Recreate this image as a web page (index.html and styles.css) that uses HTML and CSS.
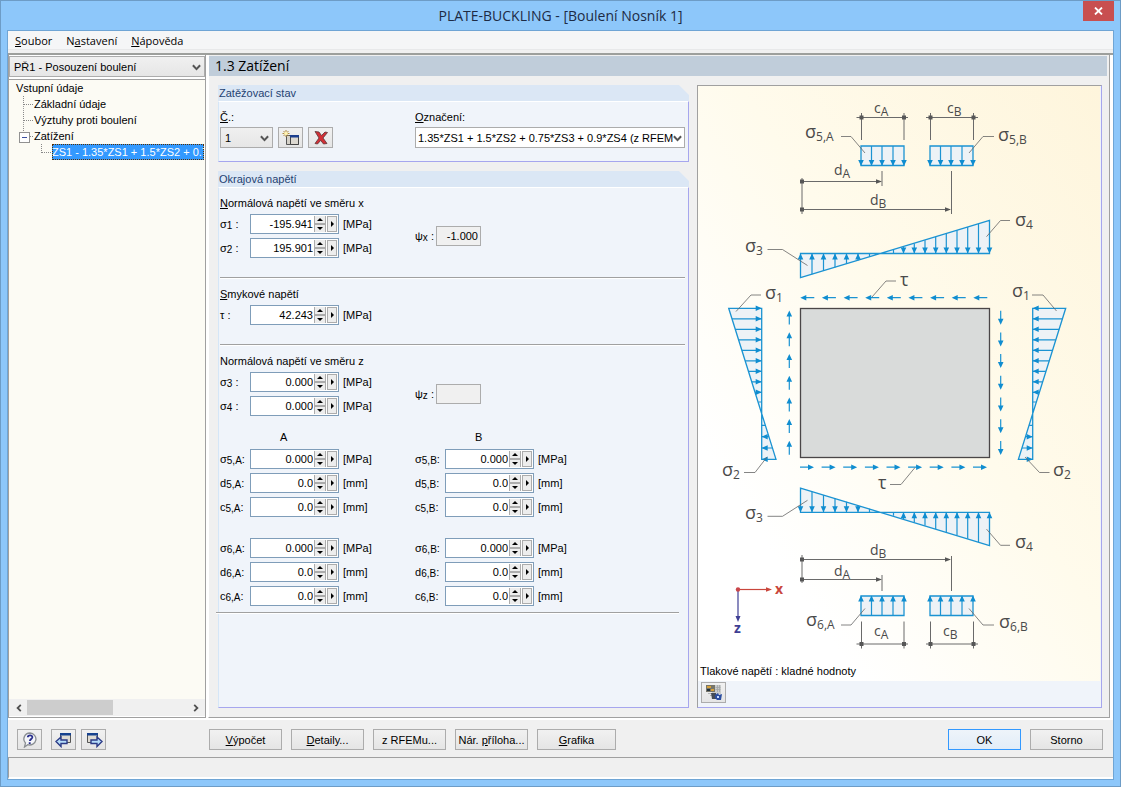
FILE: index.html
```html
<!DOCTYPE html>
<html lang="cs">
<head>
  <meta charset="UTF-8">
  <meta name="viewport" content="width=device-width, initial-scale=1.0">
  <title>PLATE-BUCKLING - [Boulení Nosník 1]</title>
  <link rel="stylesheet" href="styles.css">
</head>
<body>
  <div class="window">
    <header class="titlebar">
      <h1>PLATE-BUCKLING - [Boulení Nosník 1]</h1>
      <button class="close-btn" aria-label="Zavřít">
        <svg width="9" height="8" viewBox="0 0 9 8"><path d="M1 0.5l7 7M8 0.5l-7 7" stroke="#fff" stroke-width="1.8"/></svg>
      </button>
    </header>

    <div class="client">
      <nav class="menubar">
        <button><u>S</u>oubor</button>
        <button>N<u>a</u>stavení</button>
        <button><u>N</u>ápověda</button>
      </nav>

      <div class="workspace">
        <!-- strom -->
        <aside class="sidebar">
          <div class="combo case-combo">
            <select aria-label="Případ"><option>PŘ1 - Posouzení boulení</option></select>
            <svg class="chevron" viewBox="0 0 8 6"><path d="M0.8 1l3.2 3.4L7.2 1"/></svg>
          </div>
          <div class="tree">
            <p class="tree-root">Vstupní údaje</p>
            <ul>
              <li><a href="#">Základní údaje</a></li>
              <li><a href="#">Výztuhy proti boulení</a></li>
              <li class="open"><a href="#">Zatížení</a>
                <ul>
                  <li><a href="#" class="selected">ZS1 - 1.35*ZS1 + 1.5*ZS2 + 0.7</a></li>
                </ul>
              </li>
            </ul>
          </div>
          <div class="scrollbar">
            <button aria-label="Doleva"><svg width="6" height="8" viewBox="0 0 6 8"><path d="M4.8 0.8L1.6 4l3.2 3.2"/></svg></button>
            <div class="track"><div class="thumb"></div></div>
            <button aria-label="Doprava"><svg width="6" height="8" viewBox="0 0 6 8"><path d="M1.2 0.8L4.4 4l-3.2 3.2"/></svg></button>
          </div>
        </aside>

        <main class="main">
          <h2 class="page-title">1.3 Zatížení</h2>
          <div class="columns">
            <div class="forms">
              <!-- zatěžovací stav -->
              <section class="group">
                <h3>Zatěžovací stav</h3>
                <div class="group-body case-body">
                  <div>
                    <label class="caption" for="case-no"><u>Č</u>.:</label>
                    <div class="case-row">
                      <div class="combo small-combo">
                        <select id="case-no"><option>1</option></select>
                        <svg class="chevron" viewBox="0 0 8 6"><path d="M0.8 1l3.2 3.4L7.2 1"/></svg>
                      </div>
                      <button class="btn icon-btn" aria-label="Nový">
                        <svg width="18" height="16" viewBox="0 0 18 16">
                          <path d="M4.5 5.5h4v2h8v7h-12z" fill="#d5d1c8" stroke="#555"/>
                          <path d="M8.5 5.500h8v9h-8z" fill="#dcd8d0" stroke="#444"/>
                          <path d="M8 5h9v2.500H8z" fill="#1c3f8f"/>
                          <path d="M4 0v7M0.5 3.5h7M1.5 1l5 5M6.5 1l-5 5" stroke="#b08a3c"/>
                          <circle cx="4" cy="3.5" r="1.8" fill="#fff3b0"/>
                        </svg>
                      </button>
                      <button class="btn icon-btn" aria-label="Smazat">
                        <svg width="16" height="16" viewBox="0 0 16 16">
                          <path d="M2 1.5l4 0.5 2.5 3.5L12 2l2.500 0.5L10 8l4 5.5-3.5 0.5-2.8-3.6L4.5 14 2 13.5 6 8z" fill="#d22f35" stroke="#5a3537" stroke-width="0.8"/>
                        </svg>
                      </button>
                    </div>
                  </div>
                  <div>
                    <label class="caption" for="case-name"><u>O</u>značení:</label>
                    <div class="combo name-combo">
                      <select id="case-name"><option>1.35*ZS1 + 1.5*ZS2 + 0.75*ZS3 + 0.9*ZS4 (z RFEM</option></select>
                      <svg class="chevron" viewBox="0 0 8 6"><path d="M0.8 1l3.2 3.4L7.2 1"/></svg>
                    </div>
                  </div>
                </div>
              </section>

              <!-- okrajová napětí -->
              <section class="group grow">
                <h3>Okrajová napětí</h3>
                <div class="group-body">
                  <div class="block">
                    <p class="caption"><u>N</u>ormálová napětí ve směru x</p>
                    <div class="pair">
                      <div class="stack">
                        <div class="field"><label for="s1">σ<sub>1</sub> :</label><span class="spin"><input id="s1" value="-195.941"><button class="step" aria-label="Krok"></button><button class="more" aria-label="Více"></button></span><span class="unit">[MPa]</span></div>
                        <div class="field"><label for="s2">σ<sub>2</sub> :</label><span class="spin"><input id="s2" value="195.901"><button class="step" aria-label="Krok"></button><button class="more" aria-label="Více"></button></span><span class="unit">[MPa]</span></div>
                      </div>
                      <div class="ratio"><label for="psx">ψ<sub>x</sub> :</label><input id="psx" value="-1.000" readonly></div>
                    </div>
                  </div>
                  <hr>
                  <div class="block">
                    <p class="caption"><u>S</u>mykové napětí</p>
                    <div class="field"><label for="tau">τ :</label><span class="spin"><input id="tau" value="42.243"><button class="step" aria-label="Krok"></button><button class="more" aria-label="Více"></button></span><span class="unit">[MPa]</span></div>
                  </div>
                  <hr>
                  <div class="block">
                    <p class="caption">Normálová napětí ve směru z</p>
                    <div class="pair">
                      <div class="stack">
                        <div class="field"><label for="s3">σ<sub>3</sub> :</label><span class="spin"><input id="s3" value="0.000"><button class="step" aria-label="Krok"></button><button class="more" aria-label="Více"></button></span><span class="unit">[MPa]</span></div>
                        <div class="field"><label for="s4">σ<sub>4</sub> :</label><span class="spin"><input id="s4" value="0.000"><button class="step" aria-label="Krok"></button><button class="more" aria-label="Více"></button></span><span class="unit">[MPa]</span></div>
                      </div>
                      <div class="ratio"><label for="psz">ψ<sub>z</sub> :</label><input id="psz" value="" readonly></div>
                    </div>
                    <div class="pair heads"><span>A</span><span>B</span></div>
                    <div class="pair">
                      <div class="stack">
                        <div class="field"><label for="s5a">σ<sub>5,A</sub>:</label><span class="spin"><input id="s5a" value="0.000"><button class="step" aria-label="Krok"></button><button class="more" aria-label="Více"></button></span><span class="unit">[MPa]</span></div>
                        <div class="field"><label for="d5a">d<sub>5,A</sub>:</label><span class="spin"><input id="d5a" value="0.0"><button class="step" aria-label="Krok"></button><button class="more" aria-label="Více"></button></span><span class="unit">[mm]</span></div>
                        <div class="field"><label for="c5a">c<sub>5,A</sub>:</label><span class="spin"><input id="c5a" value="0.0"><button class="step" aria-label="Krok"></button><button class="more" aria-label="Více"></button></span><span class="unit">[mm]</span></div>
                      </div>
                      <div class="stack">
                        <div class="field"><label for="s5b">σ<sub>5,B</sub>:</label><span class="spin"><input id="s5b" value="0.000"><button class="step" aria-label="Krok"></button><button class="more" aria-label="Více"></button></span><span class="unit">[MPa]</span></div>
                        <div class="field"><label for="d5b">d<sub>5,B</sub>:</label><span class="spin"><input id="d5b" value="0.0"><button class="step" aria-label="Krok"></button><button class="more" aria-label="Více"></button></span><span class="unit">[mm]</span></div>
                        <div class="field"><label for="c5b">c<sub>5,B</sub>:</label><span class="spin"><input id="c5b" value="0.0"><button class="step" aria-label="Krok"></button><button class="more" aria-label="Více"></button></span><span class="unit">[mm]</span></div>
                      </div>
                    </div>
                    <div class="pair second">
                      <div class="stack">
                        <div class="field"><label for="s6a">σ<sub>6,A</sub>:</label><span class="spin"><input id="s6a" value="0.000"><button class="step" aria-label="Krok"></button><button class="more" aria-label="Více"></button></span><span class="unit">[MPa]</span></div>
                        <div class="field"><label for="d6a">d<sub>6,A</sub>:</label><span class="spin"><input id="d6a" value="0.0"><button class="step" aria-label="Krok"></button><button class="more" aria-label="Více"></button></span><span class="unit">[mm]</span></div>
                        <div class="field"><label for="c6a">c<sub>6,A</sub>:</label><span class="spin"><input id="c6a" value="0.0"><button class="step" aria-label="Krok"></button><button class="more" aria-label="Více"></button></span><span class="unit">[mm]</span></div>
                      </div>
                      <div class="stack">
                        <div class="field"><label for="s6b">σ<sub>6,B</sub>:</label><span class="spin"><input id="s6b" value="0.000"><button class="step" aria-label="Krok"></button><button class="more" aria-label="Více"></button></span><span class="unit">[MPa]</span></div>
                        <div class="field"><label for="d6b">d<sub>6,B</sub>:</label><span class="spin"><input id="d6b" value="0.0"><button class="step" aria-label="Krok"></button><button class="more" aria-label="Více"></button></span><span class="unit">[mm]</span></div>
                        <div class="field"><label for="c6b">c<sub>6,B</sub>:</label><span class="spin"><input id="c6b" value="0.0"><button class="step" aria-label="Krok"></button><button class="more" aria-label="Více"></button></span><span class="unit">[mm]</span></div>
                      </div>
                    </div>
                  </div>
                  <hr class="last">
                </div>
              </section>
            </div>

            <!-- schéma -->
            <section class="preview">
              <div class="picture">
                <svg class="diagram" viewBox="698 86 402 577">
                  <defs>
                    <g id="loads">
                      <path class="area" d="M861 146h43v19.5h-43zM930 146h43v19.5h-43z"/>
                      <path class="blue" d="M871.5 146v19M882 146v19M893 146v19M940.5 146v19M951 146v19M962 146v19"/>
                      <path class="head" d="M861 166l-2.8-6h5.6zM871.5 166l-2.8-6h5.6zM882 166l-2.8-6h5.6zM893 166l-2.8-6h5.6zM904 166l-2.8-6h5.6zM930 166l-2.8-6h5.6zM940.5 166l-2.8-6h5.6zM951 166l-2.8-6h5.6zM962 166l-2.8-6h5.6zM973 166l-2.8-6h5.6z"/>
                      <path class="dim" d="M856.5 117.5h51.5M861.5 113v27M904 113v27M926 117.5h52M930.5 113v27M973.5 113v27"/>
                      <path class="dot" d="M859.5 115.5h4v4h-4zM902 115.5h4v4h-4zM928.5 115.5h4v4h-4zM971.5 115.5h4v4h-4z"/>
                      <path class="leader" d="M841 136.5h10l14 16.5M994 136.5h-11l-14 16.5"/>
                    </g>
                    <g id="stress-z">
                      <path class="area" d="M800.5 253.5h189v-33.2L800.5 277.7z"/>
                      <path class="blue" d="M812 253.5v20.8M823.5 253.5v17.4M835 253.5v14M846.5 253.5v10.5M858 253.5v7.1M869.5 253.5v3.5M893.5 253.5v-3.5M903.5 253.5v-6.6M914.3 253.5v-10M925 253.5v-13.3M935.7 253.5v-16.6M946.3 253.5v-19.9M957 253.5v-23.2M967.7 253.5v-26.5M978.5 253.5v-29.8"/>
                      <path class="head" d="M800.5 253.5l-2.8 6h5.6zM812 253.5l-2.8 6h5.6zM823.5 253.5l-2.8 6h5.6zM835 253.5l-2.8 6h5.6zM846.5 253.5l-2.8 6h5.6zM858 253.5l-2.8 6h5.6zM903.5 253.5l-2.8-6h5.6zM914.3 253.5l-2.8-6h5.6zM925 253.5l-2.8-6h5.6zM935.7 253.5l-2.8-6h5.6zM946.3 253.5l-2.8-6h5.6zM957 253.5l-2.8-6h5.6zM967.7 253.5l-2.8-6h5.6zM978.5 253.5l-2.8-6h5.6zM989.5 253.5l-2.8-6h5.6z"/>
                      <path class="leader" d="M767.5 249.5h15l25 16M1010 220.5h-9.5l-14 16.2"/>
                    </g>
                    <g id="stress-x">
                      <path class="area" d="M728.7 308.3h33v151H776z"/>
                      <path class="blue" d="M732 318.8h29.7M735.3 329.3h26.4M738.6 339.8h23.1M741.9 350.3h19.8M745.1 360.8h16.6M748.4 371.3h13.3M751.7 381.8h10M755 392.3h6.7M758.5 402h3.2M765.3 425.3h-3.6M768.9 436.7h-7.2M772.4 448h-10.7"/>
                      <path class="head" d="M761.7 308.3l-6-2.8v5.6zM761.7 318.8l-6-2.8v5.6zM761.7 329.3l-6-2.8v5.6zM761.7 339.8l-6-2.8v5.6zM761.7 350.3l-6-2.8v5.6zM761.7 360.8l-6-2.8v5.6zM761.7 371.3l-6-2.8v5.6zM761.7 381.8l-6-2.8v5.6zM761.7 392.3l-6-2.8v5.6zM761.7 436.7l6-2.8v5.6zM761.7 448l6-2.8v5.6zM761.7 459.3l6-2.8v5.6z"/>
                    </g>
                    <g id="shear-row">
                      <path class="blue" d="M5 0h9M26.6 0h9M48.3 0h9M69.9 0h9M91.5 0h9M113.1 0h9M134.8 0h9M156.4 0h9M178 0h9"/>
                      <path class="head" d="M0 0l6-2.8v5.6zM21.6 0l6-2.8v5.6zM43.3 0l6-2.8v5.6zM64.9 0l6-2.8v5.6zM86.5 0l6-2.8v5.6zM108.1 0l6-2.8v5.6zM129.8 0l6-2.8v5.6zM151.4 0l6-2.8v5.6zM173 0l6-2.8v5.6z"/>
                    </g>
                    <g id="shear-col">
                      <path class="blue" d="M0 5v9M0 26.7v9M0 48.5v9M0 70.2v9M0 91.9v9M0 113.6v9M0 135.3v9"/>
                      <path class="head" d="M0 0l-2.8 6h5.6zM0 21.7l-2.8 6h5.6zM0 43.5l-2.8 6h5.6zM0 65.2l-2.8 6h5.6zM0 86.9l-2.8 6h5.6zM0 108.6l-2.8 6h5.6zM0 130.3l-2.8 6h5.6z"/>
                    </g>
                  </defs>

                  <use href="#loads"/>
                  <use href="#loads" transform="translate(0 761.5) scale(1 -1)"/>
                  <use href="#stress-z"/>
                  <use href="#stress-z" transform="translate(0 765.8) scale(1 -1)"/>
                  <use href="#stress-x"/>
                  <use href="#stress-x" transform="translate(1794.4 0) scale(-1 1)"/>

                  <rect x="800.5" y="308.5" width="189" height="149" fill="#d9dbda" stroke="#4a4647" stroke-width="1.3"/>
                  <use href="#shear-row" x="800.3" y="297.7"/>
                  <use href="#shear-row" transform="translate(987 467.2) scale(-1 1)"/>
                  <use href="#shear-col" x="789.3" y="310.5"/>
                  <use href="#shear-col" transform="translate(1000.7 455) scale(1 -1)"/>

                  <!-- kóty dA, dB -->
                  <path class="dim" d="M802 178v36M802 181.5h75M882 171v15M802 209.5h144M951.5 171v43M802 555v28M802 559.5h144M951.5 556v35M802 579.5h75M882 575v16"/>
                  <path class="dot" d="M800 179.5h4v4h-4zM800 207.5h4v4h-4zM800 557.5h4v4h-4zM800 577.5h4v4h-4zM882 181.5l-6-2.3v4.6zM951 209.5l-6-2.3v4.6zM951 559.5l-6-2.3v4.6zM882 579.5l-6-2.3v4.6z"/>
                  <path class="leader" d="M761 295h-10l-15 16.5M1032 295h11l13.5 16M744 472.5h11l12-15.5M1049.5 472.5h-10L1025 457M896 281h-10l-14 16M890 484.5h11l14-17"/>

                  <g class="sym">
                    <text x="805" y="138">σ<tspan class="idx" dy="3">5,A</tspan></text>
                    <text x="998" y="141">σ<tspan class="idx" dy="3">5,B</tspan></text>
                    <text x="745" y="252">σ<tspan class="idx" dy="3">3</tspan></text>
                    <text x="1015" y="226">σ<tspan class="idx" dy="3">4</tspan></text>
                    <text x="765" y="299">σ<tspan class="idx" dy="3">1</tspan></text>
                    <text x="1012" y="297">σ<tspan class="idx" dy="3">1</tspan></text>
                    <text x="722" y="476">σ<tspan class="idx" dy="3">2</tspan></text>
                    <text x="1053" y="476">σ<tspan class="idx" dy="3">2</tspan></text>
                    <text x="745" y="519">σ<tspan class="idx" dy="3">3</tspan></text>
                    <text x="1015" y="548">σ<tspan class="idx" dy="3">4</tspan></text>
                    <text x="806" y="626">σ<tspan class="idx" dy="3">6,A</tspan></text>
                    <text x="999" y="628">σ<tspan class="idx" dy="3">6,B</tspan></text>
                    <text x="900" y="286">τ</text>
                    <text x="878" y="489">τ</text>
                  </g>
                  <g class="dim-text">
                    <text x="874" y="113">c<tspan class="idx" dy="3">A</tspan></text>
                    <text x="947" y="113">c<tspan class="idx" dy="3">B</tspan></text>
                    <text x="834" y="175">d<tspan class="idx" dy="3">A</tspan></text>
                    <text x="870" y="205">d<tspan class="idx" dy="3">B</tspan></text>
                    <text x="870" y="555">d<tspan class="idx" dy="3">B</tspan></text>
                    <text x="834" y="576">d<tspan class="idx" dy="3">A</tspan></text>
                    <text x="874" y="636">c<tspan class="idx" dy="3">A</tspan></text>
                    <text x="943" y="636">c<tspan class="idx" dy="3">B</tspan></text>
                  </g>

                  <!-- osy -->
                  <path d="M738 589.5v27" stroke="#3f3f94" stroke-width="1.2"/>
                  <path d="M738 622l-2.5-6h5z" fill="#3f3f94"/>
                  <path d="M738 589.5h29" stroke="#c9463c" stroke-width="1.2"/>
                  <path d="M772 589.5l-6-2.3v4.6z" fill="#c9463c"/>
                  <circle cx="738" cy="589.5" r="2.2" fill="#c9464a"/>
                  <text class="axis axis-x" x="775" y="594">x</text>
                  <text class="axis axis-z" x="734" y="633">z</text>
                </svg>
                <p class="note">Tlakové napětí : kladné hodnoty</p>
              </div>
              <div class="preview-foot">
                <button class="btn icon-btn" aria-label="Obrázek">
                  <svg width="18" height="17" viewBox="0 0 18 17">
                    <path d="M1 1h9v7H1z" fill="#77766a"/>
                    <path d="M2 2h4v2H2zM6 5h3v2H6z" fill="#d8a23a"/>
                    <path d="M2 5h3v2H2z" fill="#22303a"/>
                    <path d="M10 1h6v9H7V8h3z" fill="#c9cccd"/>
                    <path d="M10.5 3.5h5M10.5 5.5h5M12.5 1v7M14.5 1v7M3 9.5h5M5 11.5h4" stroke="#a3a6a7" stroke-width="0.8"/>
                    <path d="M6 9h5v6H7z" fill="#454d58"/>
                    <path d="M10 11l3-2 1 2 3-1-1 6h-4l-2-2z" fill="#2c4fa0"/>
                    <path d="M12 12h2v2h-2z" fill="#c9dcff"/>
                  </svg>
                </button>
              </div>
            </section>
          </div>
        </main>
      </div>

      <footer class="toolbar">
        <div class="tools">
          <button class="btn icon-btn help" aria-label="Nápověda">
            <svg width="16" height="16" viewBox="0 0 16 16">
              <path d="M8 1a6.3 6 0 1 1-2.3 11.7L2.5 15l1-4A6.3 6 0 0 1 8 1z" fill="#f4f6fa" stroke="#8a8e92" stroke-width="1.3"/>
              <path d="M5.8 5.2C6 2.6 10.6 2.8 10.3 5.4 10 7 8 7 7.9 9M7.7 10.3v1.8" fill="none" stroke="#2a2f8c" stroke-width="1.9"/>
            </svg>
          </button>
          <button class="btn icon-btn" aria-label="Předchozí">
            <svg width="18" height="16" viewBox="0 0 18 16">
              <path d="M5.5 1.5h10v9h-10z" fill="#dedbd3" stroke="#555"/>
              <path d="M5 1h11v2.500H5z" fill="#17428f"/>
              <path d="M1 9.5l5-4.500v3H12v3.500H6v3z" fill="#b4dcfa" stroke="#2b3a86" stroke-width="1.4"/>
            </svg>
          </button>
          <button class="btn icon-btn" aria-label="Další">
            <svg width="18" height="16" viewBox="0 0 18 16">
              <path d="M2.5 1.5h10v9h-10z" fill="#dedbd3" stroke="#555"/>
              <path d="M2 1h11v2.500H2z" fill="#17428f"/>
              <path d="M17 9.5l-5-4.500v3H6v3.500h6v3z" fill="#b4dcfa" stroke="#2b3a86" stroke-width="1.4"/>
            </svg>
          </button>
        </div>
        <div class="actions">
          <button class="btn"><u>V</u>ýpočet</button>
          <button class="btn"><u>D</u>etaily...</button>
          <button class="btn">z RFEMu...</button>
          <button class="btn">Nár. <u>p</u>říloha...</button>
          <button class="btn wide"><u>G</u>rafika</button>
        </div>
        <div class="actions dialog">
          <button class="btn default">OK</button>
          <button class="btn">Storno</button>
        </div>
      </footer>
      <div class="statusbar"></div>
    </div>
  </div>
</body>
</html>
```
FILE: styles.css
```css
* {
  box-sizing: border-box;
}
body {
  margin: 0;
  font-family: "Liberation Sans", Arial, sans-serif;
  font-size: 11px;
  line-height: 16px;
  color: #000;
}
h1, h2, h3, p, ul {
  margin: 0;
  padding: 0;
  font-weight: normal;
}
button, input, select {
  font: inherit;
  color: inherit;
  margin: 0;
}
svg {
  display: block;
}
.window {
  display: flex;
  flex-direction: column;
  min-height: 100vh;
  padding: 0 6px 6px;
  background: #8dc7fa;
  border: 1px solid #6d9cc6;
}

/* titulek */
.titlebar {
  display: flex;
  justify-content: center;
  position: relative;
  height: 29px;
}
.titlebar h1 {
  font-family: "Open Sans", "Noto Sans", sans-serif;
  font-size: 14px;
  line-height: 29px;
  color: #1d2b45;
}
.close-btn {
  position: absolute;
  top: 0;
  right: 0;
  display: flex;
  align-items: center;
  justify-content: center;
  width: 31px;
  height: 20px;
  padding: 0;
  border: 0;
  background: #c84f50;
}
.client {
  display: flex;
  flex-direction: column;
  flex: 1;
  border: 1px solid #6fa5d5;
  background: #f0f0f0;
}
.menubar {
  display: flex;
  height: 19px;
  background: #f5f6f7;
  border-bottom: 1px solid #e8e9ea;
}
.menubar button {
  padding: 0 7px;
  border: 0;
  background: none;
  font-family: "Open Sans", "Noto Sans", sans-serif;
  font-size: 11px;
  line-height: 20px;
}

/* pracovní plocha */
.workspace {
  display: flex;
  flex: 1;
  gap: 2px;
  margin-top: 3px;
  border-top: 2px solid #9d9f9c;
  background: #fff;
}
.sidebar {
  display: flex;
  flex-direction: column;
  width: 198px;
  padding-top: 1px;
  border: 1px solid #a0a0a0;
  border-top: 0;
  background: #fff;
}
.combo {
  position: relative;
}
.combo select {
  appearance: none;
  display: block;
  width: 100%;
  height: 21px;
  padding: 0 20px 0 4px;
  border: 1px solid #acacac;
  border-radius: 0;
  background: linear-gradient(#f0f0f0, #e6e6e6);
}
.chevron {
  position: absolute;
  right: 4px;
  top: 8px;
  width: 9px;
  height: 7px;
  fill: none;
  stroke: #555;
  stroke-width: 1.8;
  pointer-events: none;
}
.name-combo select {
  padding-left: 2px;
  padding-right: 11px;
  background: #fff;
}
.name-combo .chevron {
  right: 3px;
}
.tree {
  flex: 1;
  margin-top: 2px;
  padding: 0 1px 0 7px;
  border-top: 1px solid #a0a0a0;
  overflow: hidden;
  white-space: nowrap;
  background: #fcfbf4;
}
.tree ul {
  list-style: none;
  margin-left: 7px;
}
.tree li {
  position: relative;
  padding-left: 11px;
}
.tree li::before {
  content: "";
  position: absolute;
  left: 0;
  top: 0;
  width: 9px;
  height: 8px;
  border-left: 1px dotted #888;
  border-bottom: 1px dotted #888;
}
.tree li:not(:last-child) {
  background: linear-gradient(#999 50%, transparent 50%) 0 0 / 1px 2px repeat-y;
}
.tree a {
  display: block;
  color: #000;
  text-decoration: none;
}
.tree .open::after {
  content: "";
  position: absolute;
  left: -4px;
  top: 4px;
  width: 9px;
  height: 9px;
  border: 1px solid #919191;
  background: linear-gradient(#3c4fa0, #3c4fa0) 50% 50% / 5px 1px no-repeat #fff;
}
.tree .selected {
  outline: 1px dotted #5a3000;
  outline-offset: -1px;
  background: #3399ff;
  color: #fff;
}
.scrollbar {
  display: flex;
  height: 17px;
  margin-bottom: 1px;
  padding: 0 1px;
  background: #f0f0f0;
}
.scrollbar button {
  display: flex;
  align-items: center;
  justify-content: center;
  width: 17px;
  padding: 0;
  border: 0;
  background: none;
}
.scrollbar path {
  fill: none;
  stroke: #505050;
  stroke-width: 1.8;
}
.track {
  flex: 1;
}
.thumb {
  width: 54%;
  height: 15px;
  margin-top: 1px;
  background: #cdcdcd;
}
.main {
  display: flex;
  flex-direction: column;
  flex: 1;
  min-width: 0;
  margin-right: 3px;
  border-right: 1px solid #a0a0a0;
  border-bottom: 1px solid #a0a0a0;
  border-left: 1px solid #fff;
  padding: 1px 2px 9px 0;
  background: #f0f0f0;
}
.page-title {
  padding-left: 6px;
  font-family: "Open Sans", "Noto Sans", sans-serif;
  font-size: 14px;
  line-height: 20px;
  background: #c0cdda;
}
.columns {
  display: grid;
  grid-template-columns: minmax(0, 1fr) 405px;
  gap: 8px;
  flex: 1;
  padding: 9px 5px 0 9px;
}
.forms {
  display: flex;
  flex-direction: column;
  gap: 9px;
}

/* skupiny */
.group {
  display: flex;
  flex-direction: column;
}
.grow {
  flex: 1;
}
.group h3 {
  padding-left: 1px;
  font-size: 11px;
  line-height: 16px;
  color: #1f4272;
  background: #dbe7f5;
  clip-path: polygon(0 0, calc(100% - 10px) 0, 100% 10px, 100% 100%, 0 100%);
}
.group-body {
  flex: 1;
  padding-left: 1px;
  border: 1px solid #a6a6ee;
  border-top: 1px solid #fff;
  border-left-color: #d5e6f7;
  background: #f0f4fa;
}
.case-body {
  display: grid;
  grid-template-columns: 195px 1fr;
  padding: 7px 3px 13px 1px;
}
.caption {
  display: block;
}
.case-body .caption {
  margin-bottom: 2px;
}
.case-row {
  display: flex;
  gap: 5px;
}
.small-combo {
  width: 53px;
}
.btn {
  display: flex;
  align-items: center;
  justify-content: center;
  width: 73px;
  height: 21px;
  padding: 0;
  border: 1px solid #acacac;
  background: linear-gradient(#f1f1f1, #e5e5e5);
  white-space: pre;
}
.icon-btn {
  width: 25px;
}
.block {
  padding-top: 7px;
}
.pair {
  display: grid;
  grid-template-columns: 195px 1fr;
}
.stack {
  display: grid;
  gap: 4px;
}
.block .caption {
  margin-bottom: 3px;
}
.field {
  display: grid;
  grid-template-columns: 30px 89px auto;
  align-items: center;
}
.field label, .ratio label {
  white-space: nowrap;
}
sub {
  font-size: 10px;
  line-height: 8px;
  vertical-align: -1px;
}
.spin {
  display: grid;
  grid-template-columns: minmax(0, 1fr) 12px 10px;
  gap: 1px;
  height: 20px;
  padding: 1px 1px 1px 0;
  border: 1px solid #7f9db9;
  background: #fff;
}
.spin input {
  border: 0;
  padding: 0;
  text-align: right;
  background: none;
}
.step, .more {
  position: relative;
  padding: 0;
  border: 1px solid #acacac;
  background: #ededed;
}
.step {
  border-width: 0 1px;
  background: linear-gradient(#acacac, #acacac) 0 50% / 100% 2px no-repeat #ededed;
}
.step::before, .step::after, .more::before {
  content: "";
  position: absolute;
  left: 2px;
  border: 3px solid transparent;
}
.step::before {
  top: -1px;
  border-bottom-color: #000;
}
.step::after {
  bottom: -1px;
  border-top-color: #000;
}
.more::before {
  left: 3px;
  top: 4px;
  border-left-color: #000;
  border-right-width: 0;
}
.unit {
  padding-left: 4px;
}
.ratio {
  display: grid;
  grid-template-columns: 21px 45px;
  align-items: center;
  align-self: center;
}
.ratio input {
  height: 20px;
  padding: 0 2px;
  border: 1px solid #acacac;
  background: #f0f0f0;
  text-align: right;
}
hr {
  height: 2px;
  margin: 19px 3px 0 0;
  border: 0;
  border-top: 1px solid #a0a0a0;
  border-bottom: 1px solid #fff;
}
hr.last {
  margin: 6px 9px 0 -4px;
}
.heads {
  padding: 13px 0 4px 60px;
}
.second {
  margin-top: 21px;
}

/* náhled */
.preview {
  display: flex;
  flex-direction: column;
  border: 1px solid #a6a6ee;
  border-top-color: #a0a0a0;
  border-left-color: #a0a0a0;
  background: #f0f4fa;
}
.picture {
  flex: 1;
  margin-right: 1px;
  background: linear-gradient(to top right, #fff 20%, #fffbec 55%, #fef5dc);
}
.diagram {
  width: 100%;
  height: auto;
}
.note {
  padding-left: 2px;
}
.preview-foot {
  padding: 1px 3px 4px;
}
.area {
  fill: #edf2f6;
  stroke: #1b93d2;
  stroke-width: 1.3;
}
.blue {
  fill: none;
  stroke: #1b93d2;
  stroke-width: 1.2;
}
.head {
  fill: #0f8dd0;
}
.dim {
  fill: none;
  stroke: #6a6a6a;
}
.dot {
  fill: #565656;
}
.leader {
  fill: none;
  stroke: #666;
  stroke-width: 0.8;
}
.sym, .dim-text {
  font-family: "Open Sans", "Noto Sans", sans-serif;
  font-size: 14px;
  font-weight: 500;
  fill: #4a4a4a;
}
.sym {
  font-size: 18px;
}
.idx {
  font-size: 12px;
}
.axis {
  font-family: "Open Sans", "Noto Sans", sans-serif;
  font-size: 14px;
  font-weight: bold;
}
.axis-x {
  fill: #c9463c;
}
.axis-z {
  fill: #3f3f94;
}

/* spodní lišta */
.toolbar {
  display: flex;
  height: 39px;
  padding: 9px 10px 0 9px;
  border-top: 2px solid #fff;
}
.tools {
  display: flex;
  gap: 5px;
  width: 192px;
}
.tools .help {
  margin-right: 4px;
}
.actions {
  display: flex;
  gap: 9px;
}
.actions .wide {
  width: 79px;
}
.dialog {
  margin-left: auto;
}
.btn.default {
  border-color: #3399ff;
  background: linear-gradient(#eef4fa, #e2edf8);
}
.statusbar {
  height: 22px;
  border: 1px solid #a0a0a0;
  border-right: 0;
  border-bottom: 2px solid #fff;
}
```
